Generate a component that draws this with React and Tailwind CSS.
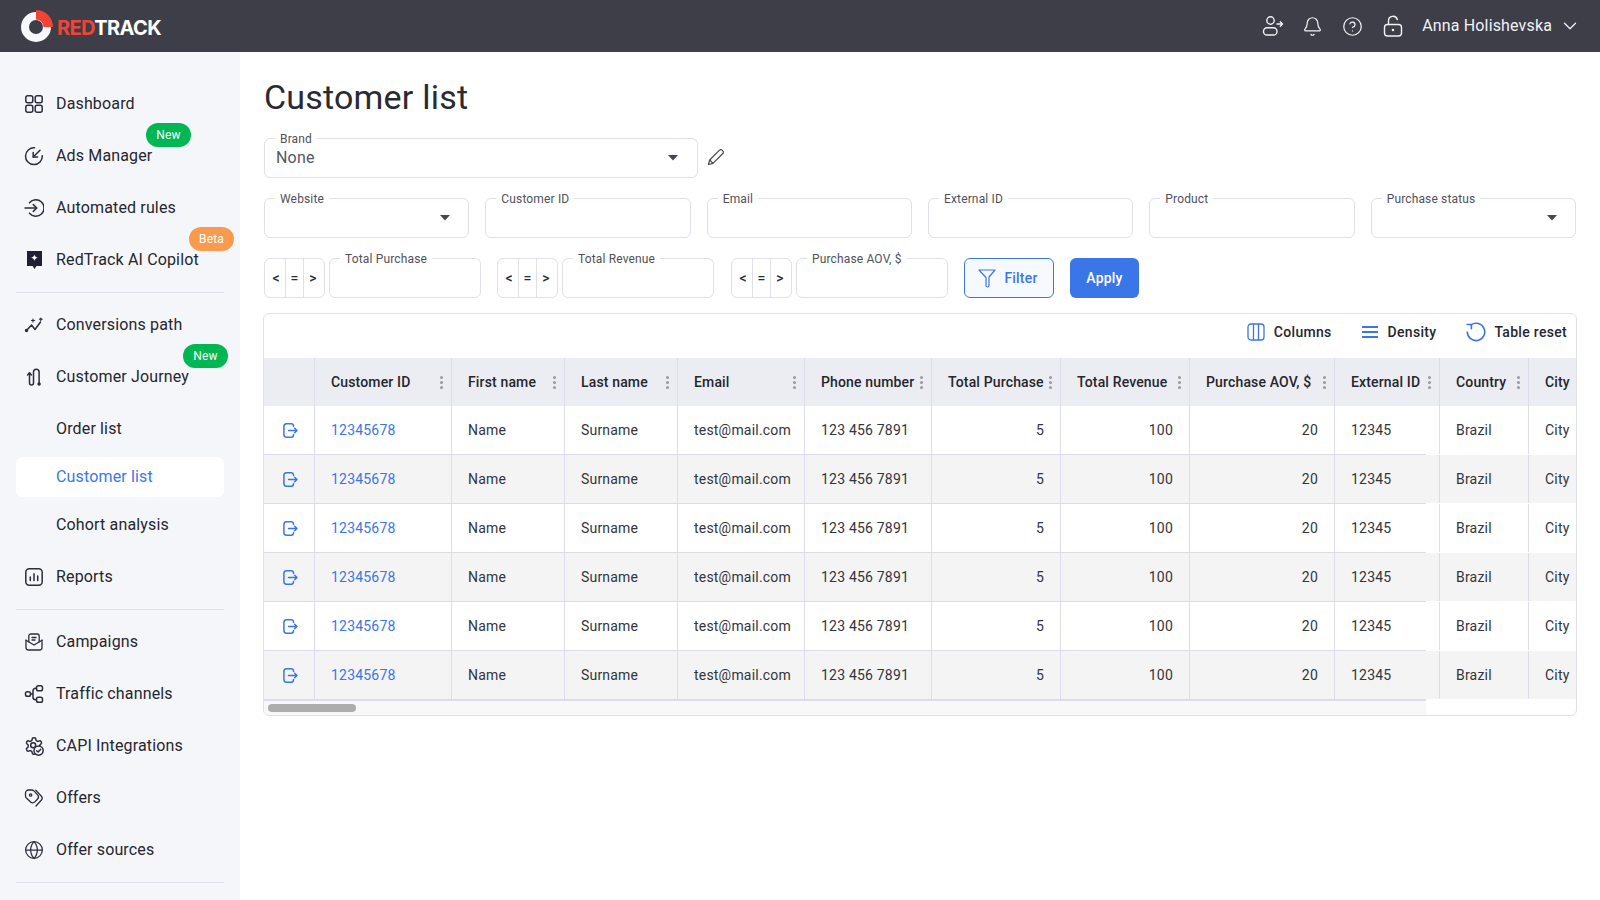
import React from 'react';
import { Bell, ChevronDown, CircleHelp, Globe } from 'lucide-react';

const Svg = ({ size = 20, box = 20, sw = 1.5, children, className = '' }) => (
  <svg width={size} height={size} viewBox={`0 0 ${box} ${box}`} fill="none" stroke="currentColor" strokeWidth={sw} strokeLinecap="round" strokeLinejoin="round" className={className}>
    {children}
  </svg>
);

const DashboardIcon = () => (
  <Svg>
    <rect x="1.8" y="1.8" width="7" height="7" rx="2" />
    <rect x="11.2" y="1.8" width="7" height="7" rx="2" />
    <rect x="1.8" y="11.2" width="7" height="7" rx="2" />
    <rect x="11.2" y="11.2" width="7" height="7" rx="2" />
  </Svg>
);
const AdsIcon = () => (
  <Svg>
    <path d="M10.5 1.8A8.4 8.4 0 1 0 18.3 9.8" />
    <path d="M16 4.3 9.2 11" />
    <path d="M9.2 6.6V11h4.4" />
  </Svg>
);
const RulesIcon = () => (
  <Svg>
    <path d="M5.5 4.8a8.2 8.2 0 1 1 0 10.4" />
    <path d="M1 10h11.5" />
    <path d="M9.3 6.6 12.7 10l-3.4 3.4" />
  </Svg>
);
const CopilotIcon = () => (
  <svg width="20" height="20" viewBox="0 0 20 20">
    <path d="M3 1h15v15h-5.600L10.500 19 8.600 16H3z" fill="#1f2033" />
    <path d="M10.500 4.300c.4 2.200 1.100 2.900 3.300 3.400-2.200.5-2.900 1.200-3.300 3.400-.5-2.200-1.200-2.900-3.400-3.400 2.200-.5 2.900-1.200 3.400-3.400z" fill="#fff" />
  </svg>
);
const ConversionsIcon = () => (
  <Svg>
    <path d="M2.500 15.500 7.500 10l3.500 4.500 5.500-7.500" />
    <circle cx="2.500" cy="15.500" r="1" fill="currentColor" />
    <path d="M7.500 5.500h3M9 4v3" strokeWidth="1.200" />
    <path d="M15.500 4.200h2.600M16.800 3v2.600" strokeWidth="1.200" />
  </Svg>
);
const JourneyIcon = () => (
  <Svg>
    <path d="M5.500 6v10a2 2 0 0 0 4 0V5a2.800 2.800 0 0 1 5.600 0v11.500" />
    <path d="M3.600 8 5.500 5.800 7.400 8" />
    <circle cx="15.100" cy="17" r="1" fill="currentColor" />
  </Svg>
);
const ReportsIcon = () => (
  <Svg>
    <rect x="1.800" y="1.800" width="16.400" height="16.400" rx="3.500" />
    <path d="M6.300 10v3.500M10 6.800v6.700M13.700 9v4.500" />
  </Svg>
);
const CampaignsIcon = () => (
  <Svg sw={1.300}>
    <path d="M2 8.200v7.300a2.500 2.500 0 0 0 2.500 2.500h11a2.500 2.500 0 0 0 2.500-2.500V8.200" />
    <path d="M2 8.200 10 13l8-4.800" />
    <path d="M4.800 9.800V4a2 2 0 0 1 2-2h6.400a2 2 0 0 1 2 2v5.800" />
    <path d="M8 5.500h4M8 8h3" />
  </Svg>
);
const TrafficIcon = () => (
  <Svg>
    <rect x="1.500" y="7.800" width="5" height="4.400" rx="1.800" />
    <rect x="12.500" y="1.800" width="6" height="5" rx="1.800" />
    <rect x="12.500" y="13.200" width="6" height="5" rx="1.800" />
    <path d="M6.500 10H9M12.500 4.300H11.500a2.500 2.500 0 0 0-2.500 2.500v6.400a2.500 2.500 0 0 0 2.500 2.500h1" />
  </Svg>
);
const CapiIcon = () => (
  <Svg box={24} sw={1.800}>
    <path d="M12.220 2h-.44a2 2 0 0 0-2 2v.18a2 2 0 0 1-1 1.730l-.43.250a2 2 0 0 1-2 0l-.15-.08a2 2 0 0 0-2.730.730l-.22.380a2 2 0 0 0 .730 2.730l.15.100a2 2 0 0 1 1 1.720v.510a2 2 0 0 1-1 1.740l-.15.090a2 2 0 0 0-.730 2.730l.22.380a2 2 0 0 0 2.730.730l.15-.08a2 2 0 0 1 2 0l.43.250a2 2 0 0 1 1 1.730V20a2 2 0 0 0 2 2h.44a2 2 0 0 0 2-2v-.18a2 2 0 0 1 1-1.730l.43-.25a2 2 0 0 1 2 0l.15.08a2 2 0 0 0 2.730-.730l.22-.39a2 2 0 0 0-.730-2.730l-.15-.08a2 2 0 0 1-1-1.740v-.5a2 2 0 0 1 1-1.740l.15-.09a2 2 0 0 0 .730-2.730l-.22-.38a2 2 0 0 0-2.730-.730l-.15.08a2 2 0 0 1-2 0l-.43-.25a2 2 0 0 1-1-1.730V4a2 2 0 0 0-2-2z" />
    <circle cx="11" cy="11" r="3" />
    <circle cx="17.500" cy="17.500" r="5.500" fill="#f5f6fa" />
    <path d="m15.200 17.600 1.700 1.700 3-3.200" />
  </Svg>
);
const OffersIcon = () => (
  <Svg sw={1.300}>
    <path d="M1.500 5A3 3 0 0 1 4.500 2h3.200a3 3 0 0 1 2.200.9l3.700 4a3 3 0 0 1 0 4.100l-2.700 2.900a3 3 0 0 1-4.300.1L2.400 10a3 3 0 0 1-.9-2.100z" />
    <circle cx="6.600" cy="7" r="1.200" />
    <path d="M11.800 2.300l5.600 5.900a2.800 2.800 0 0 1 0 3.800L12 18" />
  </Svg>
);

const SwitchUserIcon = () => (
  <Svg size={22} box={22} sw={1.400}>
    <circle cx="8.500" cy="5.500" r="3.700" />
    <rect x="1.500" y="12.800" width="13.500" height="7.200" rx="3.600" />
    <path d="M15 9h5.500M18.300 6.800 20.500 9l-2.200 2.200" />
  </Svg>
);
const LockOpenIcon = () => (
  <Svg size={22} box={22} sw={1.400}>
    <rect x="2.500" y="9.500" width="17" height="11.500" rx="3" />
    <path d="M6.500 9.500V5.800a4.500 4.500 0 0 1 8.800-1.300" />
    <circle cx="11" cy="15" r=".6" fill="currentColor" />
  </Svg>
);
const Caret = () => (
  <svg width="12" height="6" viewBox="0 0 12 6" className="shrink-0">
    <path d="M1 0h10L6 5.500z" fill="#45464f" />
  </svg>
);
const ExitIcon = () => (
  <Svg size={15} box={15} sw={1.500} className="text-[#3b76e8] ml-[3px]">
    <path d="M10.500 3.500V3a2.300 2.300 0 0 0-2.300-2.200H3.500A2.700 2.700 0 0 0 .9 3.500v8a2.700 2.700 0 0 0 2.600 2.700h4.700a2.300 2.300 0 0 0 2.300-2.200v-.5" />
    <path d="M5.500 7.500h8.500M11.700 5.200 14 7.500l-2.300 2.300" />
  </Svg>
);
const Dots = () => (
  <span className="flex flex-col gap-[2px] shrink-0">
    <span className="w-[3px] h-[3px] rounded-full bg-[#9a9ba3]" />
    <span className="w-[3px] h-[3px] rounded-full bg-[#9a9ba3]" />
    <span className="w-[3px] h-[3px] rounded-full bg-[#9a9ba3]" />
  </span>
);

const Badge = ({ label, className }) => (
  <span className={`absolute w-[45px] h-6 rounded-full flex items-center justify-center text-xs text-white ${className}`}>{label}</span>
);

const NavItem = ({ icon, label, badge }) => (
  <div className="relative h-[52px] flex items-center pl-2 gap-3 text-base tracking-[0.15px] text-[#26262e]">
    <span className="w-5 h-5 flex items-center justify-center text-[#2c2d3a]">{icon}</span>
    <span>{label}</span>
    {badge}
  </div>
);

const SubItem = ({ label, active }) => (
  <div className={`h-10 flex items-center pl-10 rounded-md text-base tracking-[0.15px] ${active ? 'bg-white text-[#3b76e8]' : 'text-[#26262e]'}`}>{label}</div>
);

const Divider = () => <div className="h-px bg-[#dfe0ee]" />;

const Sidebar = () => (
  <aside className="w-60 shrink-0 bg-[#f5f6fa] px-4 pt-[26px] overflow-hidden">
    <NavItem icon={<DashboardIcon />} label="Dashboard" />
    <NavItem icon={<AdsIcon />} label="Ads Manager" badge={<Badge label="New" className="left-[130px] -top-[7px] bg-[#00b754]" />} />
    <NavItem icon={<RulesIcon />} label="Automated rules" />
    <NavItem icon={<CopilotIcon />} label="RedTrack AI Copilot" badge={<Badge label="Beta" className="left-[173px] -top-[7px] bg-[#f99b4e]" />} />
    <div className="mt-[6px] mb-[6px]"><Divider /></div>
    <NavItem icon={<ConversionsIcon />} label="Conversions path" />
    <NavItem icon={<JourneyIcon />} label="Customer Journey" badge={<Badge label="New" className="left-[167px] -top-[7px] bg-[#00b754]" />} />
    <div className="flex flex-col gap-2 my-[6px]">
      <SubItem label="Order list" />
      <SubItem label="Customer list" active />
      <SubItem label="Cohort analysis" />
    </div>
    <NavItem icon={<ReportsIcon />} label="Reports" />
    <div className="mt-[6px] mb-[6px]"><Divider /></div>
    <NavItem icon={<CampaignsIcon />} label="Campaigns" />
    <NavItem icon={<TrafficIcon />} label="Traffic channels" />
    <NavItem icon={<CapiIcon />} label="CAPI Integrations" />
    <NavItem icon={<OffersIcon />} label="Offers" />
    <NavItem icon={<Globe size={20} strokeWidth={1.5} />} label="Offer sources" />
    <div className="mt-[6px]"><Divider /></div>
  </aside>
);

const Header = () => (
  <header className="h-[52px] shrink-0 bg-[#3d3e48] flex items-center justify-between pl-[21px] pr-[19px] text-white">
    <div className="flex items-center gap-[3px]">
      <svg width="33" height="34" viewBox="0 0 33 34" className="-mt-[2px]">
        <circle cx="15" cy="19" r="11" fill="none" stroke="#f7f8fc" strokeWidth="8" />
        <path d="M15 2A17 17 0 0 1 32 19H22.500A7.500 7.500 0 0 0 15 11.500z" fill="#f44336" />
      </svg>
      <span className="font-['Inter',sans-serif] font-bold text-[20px] leading-none tracking-[-0.6px] pt-[3px]">
        <span className="text-[#f44336]">RED</span>TRACK
      </span>
    </div>
    <div className="flex items-center text-[#f2f2f5]">
      <SwitchUserIcon />
      <Bell size={21} strokeWidth={1.4} className="ml-[18px]" />
      <CircleHelp size={21} strokeWidth={1.4} className="ml-[19px]" />
      <span className="ml-[19px]"><LockOpenIcon /></span>
      <span className="ml-[18px] text-base tracking-[0.15px]">Anna Holishevska</span>
      <ChevronDown size={22} strokeWidth={1.4} className="ml-[7px]" />
    </div>
  </header>
);

const Field = ({ label, select, className = '' }) => (
  <div className={`relative h-10 rounded-md border border-[#dfe0e8] bg-white flex items-center justify-end pr-[17px] ${className}`}>
    <span className="absolute left-[10px] -top-[7px] bg-white px-[5px] text-xs leading-[14px] tracking-[0.15px] text-[#50515a]">{label}</span>
    {select && <Caret />}
  </div>
);

const Comparator = () => (
  <div className="w-[61px] h-10 shrink-0 rounded-md border border-[#dfe0e8] flex text-sm font-medium text-[#2a2a33]">
    <span className="w-[21px] pl-[2px] flex items-center justify-center border-r border-[#dfe0e8]">&lt;</span>
    <span className="w-[18px] flex items-center justify-center border-r border-[#dfe0e8]">=</span>
    <span className="flex-1 pr-[2px] flex items-center justify-center">&gt;</span>
  </div>
);

const CompareField = ({ label, className = '' }) => (
  <div className={`flex gap-1 w-[217px] ${className}`}>
    <Comparator />
    <Field label={label} className="flex-1" />
  </div>
);

const columns = [
  { key: 'open', label: '', width: 'w-[51px]' },
  { key: 'id', label: 'Customer ID', width: 'w-[137px]' },
  { key: 'first', label: 'First name', width: 'w-[113px]' },
  { key: 'last', label: 'Last name', width: 'w-[113px]' },
  { key: 'email', label: 'Email', width: 'w-[127px]' },
  { key: 'phone', label: 'Phone number', width: 'w-[127px]' },
  { key: 'purchase', label: 'Total Purchase', width: 'w-[129px]', right: true },
  { key: 'revenue', label: 'Total Revenue', width: 'w-[129px]', right: true },
  { key: 'aov', label: 'Purchase AOV, $', width: 'w-[145px]', right: true },
  { key: 'external', label: 'External ID', width: 'w-[105px]' },
  { key: 'country', label: 'Country', width: 'w-[89px]' },
  { key: 'city', label: 'City', width: 'w-[60px]' },
];

const row = {
  id: '12345678',
  first: 'Name',
  last: 'Surname',
  email: 'test@mail.com',
  phone: '123 456 7891',
  purchase: '5',
  revenue: '100',
  aov: '20',
  external: '12345',
  country: 'Brazil',
  city: 'City',
};

const rows = [0, 1, 2, 3, 4, 5];

const Table = () => (
  <div className="-mx-px rounded-md border border-[#dfe0ee] overflow-hidden bg-white">
    <div className="h-11 flex items-center justify-end pr-[9px] pb-2 gap-[30px] text-sm font-medium tracking-[0.3px] text-[#26262e]">
      <div className="flex items-center gap-[9px]">
        <svg width="18" height="18" viewBox="0 0 18 18" fill="none" stroke="#3b76e8" strokeWidth="1.300">
          <rect x="1" y="1" width="16" height="16" rx="3" />
          <path d="M6.500 1v16M11.500 1v16" />
        </svg>
        Columns
      </div>
      <div className="flex items-center gap-[10px]">
        <svg width="16" height="12" viewBox="0 0 16 12" stroke="#3b76e8" strokeWidth="1.800">
          <path d="M0 1h16M0 6h16M0 11h16" />
        </svg>
        Density
      </div>
      <div className="flex items-center gap-2">
        <svg width="20" height="20" viewBox="0 0 20 20" fill="none" stroke="#3b76e8" strokeWidth="1.600" strokeLinecap="round">
          <path d="M5 2.800A8.700 8.700 0 1 1 1.300 10" />
          <path d="M5.400 6.800V2.500H1.200" strokeLinejoin="round" />
        </svg>
        Table reset
      </div>
    </div>
    <div className="flex h-12 bg-[#ebedf2] text-sm font-medium tracking-[0.15px] text-[#26262e]">
      {columns.map((c) => (
        <div key={c.key} className={`${c.width} shrink-0 flex items-center justify-between pl-4 pr-2 border-r border-[#dcdcec] whitespace-nowrap`}>
          <span>{c.label}</span>
          {c.label && c.key !== 'city' && <Dots />}
        </div>
      ))}
    </div>
    {rows.map((i) => (
      <div key={i}>
        <div className={`flex h-12 text-sm tracking-[0.2px] text-[#33343c] ${i % 2 === 1 ? 'bg-[#f4f4f5]' : 'bg-white'}`}>
          {columns.map((c) => (
            <div key={c.key} className={`${c.width} shrink-0 flex items-center px-4 border-r border-[#dcdcec] whitespace-nowrap ${c.right ? 'justify-end' : ''}`}>
              {c.key === 'open' ? <ExitIcon /> : c.key === 'id' ? <span className="text-[#3b76e8]">{row.id}</span> : row[c.key]}
            </div>
          ))}
        </div>
        <div className={`w-[1162px] bg-[#dcdcec] ${i === 5 ? 'h-[2px]' : 'h-px'}`} />
      </div>
    ))}
    <div className="w-[1162px] h-[14px] bg-[#f8f8f9] pt-[3px] pl-1">
      <div className="w-[88px] h-2 rounded-full bg-[#adadad]" />
    </div>
  </div>
);

export default function App() {
  return (
    <div className="w-[1600px] h-[900px] flex flex-col overflow-hidden bg-white font-['Roboto',sans-serif]">
      <Header />
      <div className="flex flex-1 min-h-0">
        <Sidebar />
        <main className="flex-1 px-6 pt-6 min-w-0">
          <h1 className="text-[34px] leading-[42px] tracking-[0.2px] text-[#2a2a33] mb-5">Customer list</h1>
          <div className="flex items-center gap-[9px] mb-5">
            <div className="relative w-[434px] h-10 rounded-md border border-[#dfe0e8] flex items-center justify-between pl-[11px] pr-[18px]">
              <span className="absolute left-[10px] -top-[7px] bg-white px-[5px] text-xs leading-[14px] tracking-[0.15px] text-[#50515a]">Brand</span>
              <span className="text-base tracking-[0.2px] text-[#55565f]">None</span>
              <Caret />
            </div>
            <svg width="18" height="18" viewBox="0 0 18 18" fill="none" stroke="#45464f" strokeWidth="1.200" strokeLinejoin="round" className="mb-[2px]">
              <path d="M1.500 16.500 2.700 12 12.500 2.200a1.900 1.900 0 0 1 2.700 0l.6.600a1.900 1.900 0 0 1 0 2.700L6 15.300z" />
              <path d="M2.700 12 6 15.300" />
            </svg>
          </div>
          <div className="grid grid-cols-6 gap-4 mb-5">
            <Field label="Website" select />
            <Field label="Customer ID" />
            <Field label="Email" />
            <Field label="External ID" />
            <Field label="Product" />
            <Field label="Purchase status" select />
          </div>
          <div className="flex items-center gap-4 mb-[15px]">
            <CompareField label="Total Purchase" />
            <CompareField label="Total Revenue" />
            <CompareField label="Purchase AOV, $" className="ml-px" />
            <button className="w-[90px] h-10 pr-[2px] rounded-md border border-[#3b76e8] bg-[#f6f9ff] text-[#3b76e8] text-sm font-medium tracking-[0.2px] flex items-center justify-center gap-2">
              <svg width="18" height="20" viewBox="0 0 18 20" fill="none" stroke="#3b76e8" strokeWidth="1.200" strokeLinejoin="round">
                <path d="M1 2h16l-6 7v8.500a1.500 1.500 0 0 1-3 0V9.500L1 2z" />
              </svg>
              Filter
            </button>
            <button className="w-[69px] h-10 rounded-md bg-[#3b76e8] text-white text-sm font-medium tracking-[0.2px]">Apply</button>
          </div>
          <Table />
        </main>
      </div>
    </div>
  );
}
